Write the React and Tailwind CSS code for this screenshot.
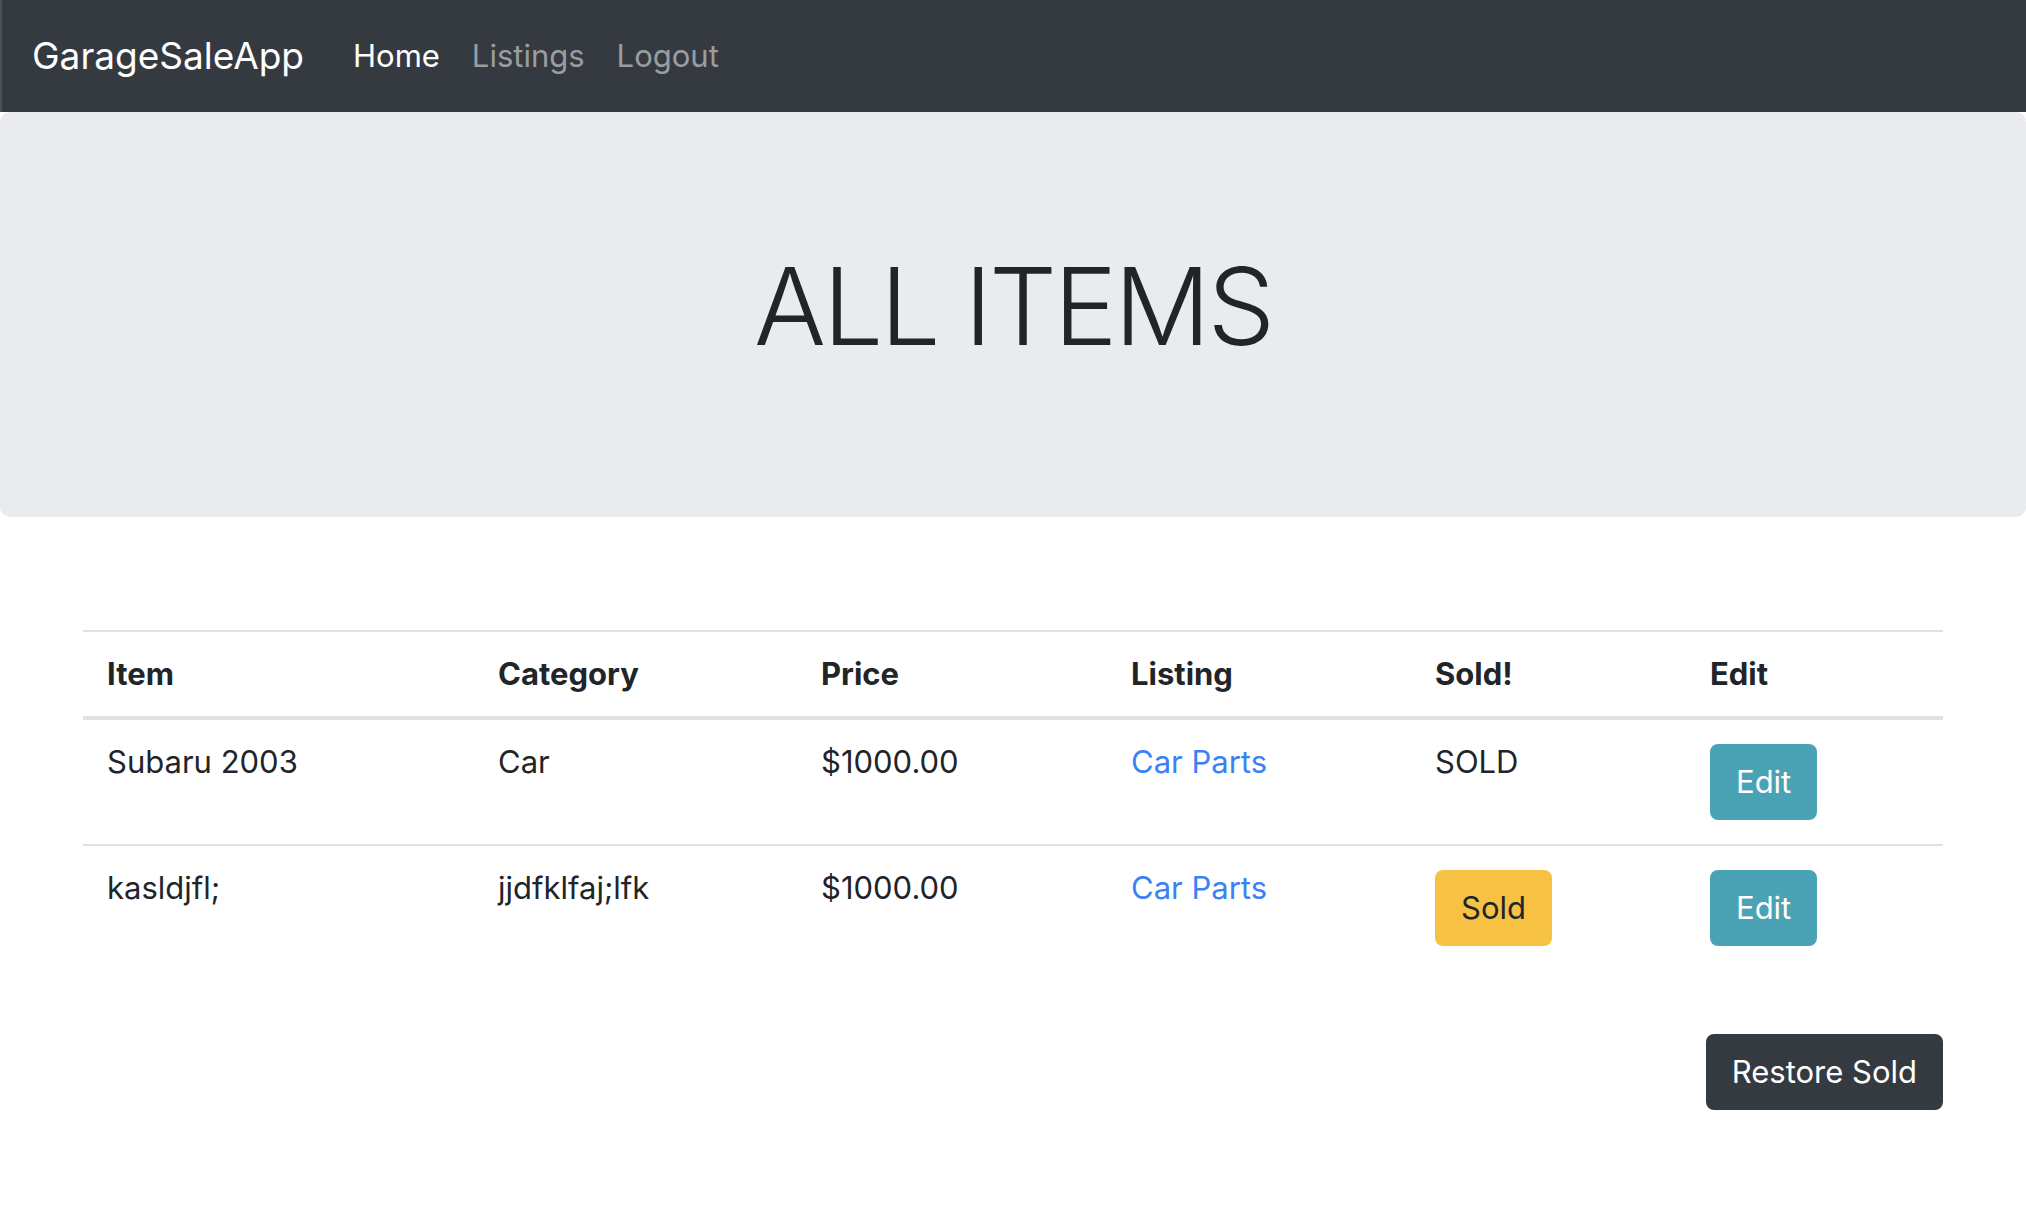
import React from "react";

const rows = [
  { item: "Subaru 2003", category: "Car", price: "$1000.00", listing: "Car Parts", sold: true },
  { item: "kasldjfl;", category: "jjdfklfaj;lfk", price: "$1000.00", listing: "Car Parts", sold: false },
];

export default function App() {
  return (
    <div className="min-h-screen bg-white font-['Inter',sans-serif] text-[#212529]">
      <nav className="h-[112px] bg-[#343a40] border-l-2 border-[#4d5258] flex items-center pl-[30px]">
        <span className="text-[37px] leading-[1.5] text-white mr-[33px]">GarageSaleApp</span>
        <a className="text-[31px] leading-[1.5] text-white px-[16px]">Home</a>
        <a className="text-[31px] leading-[1.5] text-[#9a9da0] px-[16px]">Listings</a>
        <a className="text-[31px] leading-[1.5] text-[#9a9da0] px-[16px]">Logout</a>
      </nav>

      <div className="h-[405px] bg-[#eaebef] rounded-[10px] pt-[130px]">
        <h1 className="text-center text-[107px] font-light leading-[1.2] tracking-[-0.03em] text-[#212529]">
          ALL ITEMS
        </h1>
      </div>

      <div className="w-[1860px] mx-auto mt-[113px]">
        <table className="w-full table-fixed border-separate border-spacing-0">
          <colgroup>
            <col className="w-[391px]" />
            <col className="w-[323px]" />
            <col className="w-[310px]" />
            <col className="w-[304px]" />
            <col className="w-[275px]" />
            <col className="w-[257px]" />
          </colgroup>
          <thead>
            <tr>
              {["Item", "Category", "Price", "Listing", "Sold!", "Edit"].map((h) => (
                <th
                  key={h}
                  className="text-left align-bottom font-bold text-[31px] leading-[36px] px-[24px] py-[24px] border-t-2 border-b-4 border-[#dee2e6]"
                >
                  {h}
                </th>
              ))}
            </tr>
          </thead>
          <tbody>
            {rows.map((r, i) => {
              const td =
                "align-top text-[31px] leading-[36px] px-[24px] py-[24px] " +
                (i > 0 ? "border-t-2 border-[#dee2e6]" : "");
              return (
                <tr key={i}>
                  <td className={td}>{r.item}</td>
                  <td className={td}>{r.category}</td>
                  <td className={td}>{r.price}</td>
                  <td className={td}>
                    <a className="text-[#3a81f6]">{r.listing}</a>
                  </td>
                  <td className={td}>
                    {r.sold ? (
                      "SOLD"
                    ) : (
                      <button className="h-[76px] px-[24px] border-2 border-[#f7c244] bg-[#f7c244] rounded-[8px] text-[31px] leading-[48px] text-[#212529]">
                        Sold
                      </button>
                    )}
                  </td>
                  <td className={td}>
                    <button className="h-[76px] px-[24px] border-2 border-[#4aa2b5] bg-[#4aa2b5] rounded-[8px] text-[31px] leading-[48px] text-white">
                      Edit
                    </button>
                  </td>
                </tr>
              );
            })}
          </tbody>
        </table>

        <div className="flex justify-end mt-[64px]">
          <button className="h-[76px] px-[24px] border-2 border-[#343a40] bg-[#343a40] rounded-[8px] text-[31px] leading-[48px] text-white">
            Restore Sold
          </button>
        </div>
      </div>
    </div>
  );
}
